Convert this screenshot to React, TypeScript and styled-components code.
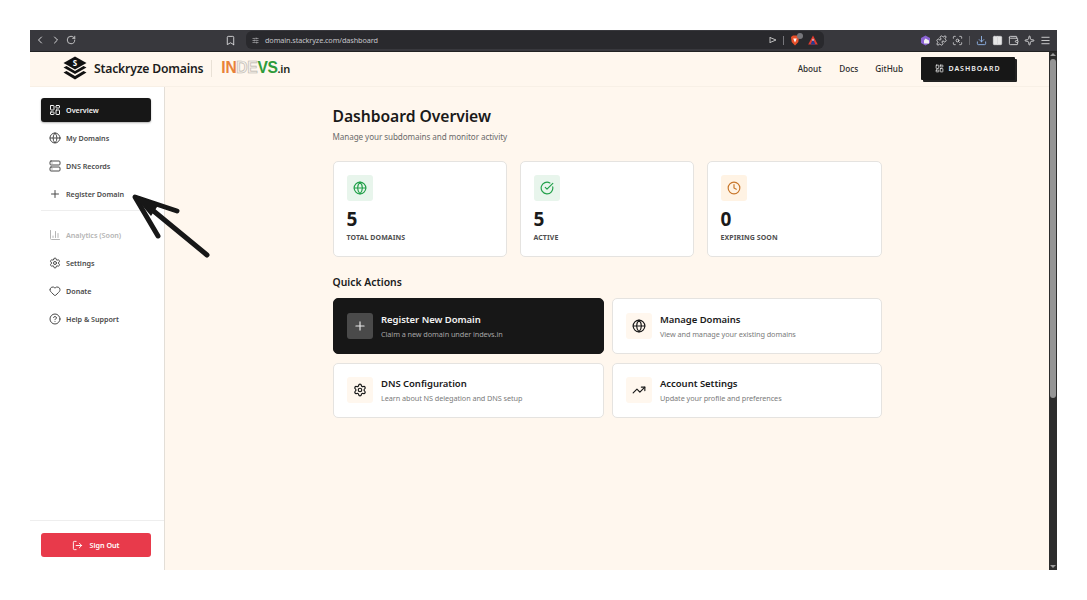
import React from "react";
import styled, { createGlobalStyle } from "styled-components";
import {
  ChevronLeft, ChevronRight, RotateCw, Bookmark, SlidersHorizontal, LayoutDashboard, Globe, Server, Plus,
  ChartColumn, Settings, Heart, CircleHelp, LogOut, CircleCheckBig, Clock, TrendingUp, Download, Columns2,
  Wallet, Menu, Puzzle, ScanSearch, Sparkle,
} from "lucide-react";

const Global = createGlobalStyle`
  html, body { margin: 0; padding: 0; background: #fff; }
  body { font-family: "Noto Sans", "Open Sans", sans-serif; width: 1087px; height: 600px; overflow: hidden; }
  * { box-sizing: border-box; }
`;

const Stage = styled.div`
  position: relative;
  width: 1087px;
  height: 600px;
  padding: 30px;
`;
const BrowserWindow = styled.div`
  width: 1027px;
  height: 540px;
  display: flex;
  flex-direction: column;
  background: #fff7ee;
`;
const Toolbar = styled.div`
  height: 22px;
  flex: none;
  background: #38383d;
  color: #d8d8da;
  display: flex;
  align-items: center;
  padding: 0 6px 1px;
  border-bottom: 1px solid #222;
`;
const NavIcons = styled.div`
  display: flex;
  align-items: center;
  gap: 4px;
  width: 191px;
  margin-left: -2px;
`;
const BookmarkSlot = styled.div`
  width: 21px;
  display: flex;
  align-items: center;
`;
const UrlBar = styled.div`
  width: 578px;
  height: 18px;
  flex: none;
  background: #29292d;
  border-radius: 6px;
  display: flex;
  align-items: center;
  gap: 6px;
  padding: 0 6px;
  font-size: 7.3px;
  color: #c4c4c8;
  letter-spacing: -0.12px;
`;
const UrlText = styled.span`
  flex: 1;
`;
const Sep = styled.span`
  width: 1px;
  height: 9px;
  background: #77777c;
`;
const Shield = styled.span`
  position: relative;
  display: flex;
  margin-right: 2px;
`;
const ShieldBadge = styled.span`
  position: absolute;
  right: -3px;
  top: -2px;
  width: 6px;
  height: 6px;
  border-radius: 50%;
  background: #77777c;
`;
const ToolIcons = styled.div`
  display: flex;
  align-items: center;
  gap: 5px;
  margin-left: auto;
  color: #d4d4d6;
`;
const ToolSep = styled.span`
  width: 1px;
  height: 9px;
  background: #66666a;
  margin: 0 1px;
`;
const WindowBody = styled.div`
  flex: 1;
  display: flex;
  min-height: 0;
`;
const Viewport = styled.div`
  flex: 1;
  display: flex;
  flex-direction: column;
  min-width: 0;
`;
const Header = styled.header`
  height: 35px;
  flex: none;
  display: flex;
  align-items: center;
  padding: 0 34px 2px 33px;
  border-bottom: 1px solid #f8f0e6;
`;
const BrandName = styled.span`
  font-size: 12.2px;
  font-weight: 600;
  color: #1c1c1c;
  margin-left: 7px;
  letter-spacing: -0.2px;
  white-space: nowrap;
`;
const BrandDivider = styled.span`
  width: 1px;
  height: 17px;
  background: #e9e1d6;
  margin: 0 9px 0 8px;
`;
const Indevs = styled.span`
  font-family: "Liberation Sans", sans-serif;
  font-size: 15.6px;
  font-weight: 700;
  letter-spacing: -0.3px;
  white-space: nowrap;
  display: flex;
  align-items: baseline;
`;
const Letters = styled.span<{ $c: string; $outline?: boolean }>`
  color: ${(p) => (p.$outline ? "#f4f0ea" : p.$c)};
  ${(p) => (p.$outline ? `-webkit-text-stroke: 0.6px ${p.$c};` : "")}
  font-weight: 900;
`;
const DotIn = styled.span`
  font-family: "Noto Sans", sans-serif;
  font-size: 11px;
  font-weight: 600;
  color: #1d2a22;
`;
const HeaderNav = styled.nav`
  margin-left: auto;
  display: flex;
  align-items: center;
`;
const NavLink = styled.a<{ $gap: number }>`
  font-size: 8.2px;
  font-weight: 500;
  color: #2a2a2a;
  margin-right: ${(p) => p.$gap}px;
`;
const DashButton = styled.button`
  width: 94px;
  height: 23px;
  border: 0;
  border-radius: 1px;
  background: #171717;
  color: #f0f0f0;
  box-shadow: 2px 2px 0 #222;
  display: flex;
  align-items: center;
  justify-content: center;
  gap: 4px;
  font-family: inherit;
  font-size: 7px;
  font-weight: 600;
  letter-spacing: 1px;
`;
const Body = styled.div`
  flex: 1;
  min-height: 0;
  display: flex;
`;
const Sidebar = styled.aside`
  width: 135px;
  flex: none;
  background: #fff;
  border-right: 1px solid #e3ded7;
  display: flex;
  flex-direction: column;
  padding: 11px 0 13px;
`;
const NavList = styled.div`
  padding: 0 13px 0 11px;
  display: flex;
  flex-direction: column;
  flex: 1;
`;
const NavItem = styled.div<{ $active?: boolean; $muted?: boolean }>`
  height: 24px;
  margin-bottom: 4px;
  flex: none;
  display: flex;
  align-items: center;
  gap: 5px;
  padding: 0 0 1px 8px;
  border-radius: 3px;
  font-size: 7.2px;
  font-weight: 600;
  white-space: nowrap;
  letter-spacing: -0.03px;
  color: ${(p) => (p.$active ? "#f4f4f4" : p.$muted ? "#b4b4b4" : "#4a4a4a")};
  background: ${(p) => (p.$active ? "#171717" : "transparent")};
  box-shadow: ${(p) => (p.$active ? "0 1px 2px rgba(0,0,0,.3)" : "none")};
`;
const NavRule = styled.div`
  height: 1px;
  background: #eeeeee;
  margin: 0 0 12px;
  flex: none;
`;
const SidebarFoot = styled.div`
  border-top: 1px solid #eeeeee;
  padding: 12px 13px 0 11px;
`;
const SignOut = styled.button`
  width: 110px;
  height: 24px;
  border: 0;
  border-radius: 3px;
  background: #e83a4b;
  color: #fff;
  display: flex;
  align-items: center;
  justify-content: center;
  gap: 6px;
  font-family: inherit;
  font-size: 7.2px;
  font-weight: 600;
`;
const Main = styled.main`
  flex: 1;
  min-width: 0;
  padding-top: 19px;
`;
const Container = styled.div`
  width: 549px;
  margin: 0 auto;
  color: #1a1a1a;
`;
const Title = styled.h1`
  margin: 0;
  font-size: 15.7px;
  line-height: 21px;
  font-weight: 600;
  letter-spacing: -0.05px;
`;
const Subtitle = styled.p`
  margin: 4px 0 0;
  font-size: 8.1px;
  line-height: 11px;
  color: #6b6b6b;
  letter-spacing: -0.07px;
`;
const Stats = styled.div`
  display: grid;
  grid-template-columns: 174px 174px 175px;
  gap: 13px;
  margin-top: 19px;
`;
const Card = styled.div`
  height: 96px;
  background: #fff;
  border: 1px solid #e5e3e0;
  border-radius: 5px;
  padding: 13px;
`;
const IconTile = styled.div<{ $bg: string; $fg: string }>`
  width: 26px;
  height: 26px;
  border-radius: 3px;
  display: flex;
  align-items: center;
  justify-content: center;
  background: ${(p) => p.$bg};
  color: ${(p) => p.$fg};
  flex: none;
`;
const Value = styled.div`
  font-size: 19px;
  line-height: 22px;
  font-weight: 700;
  margin-top: 7px;
`;
const Label = styled.div`
  font-size: 7px;
  line-height: 10px;
  font-weight: 700;
  color: #4f4f4f;
  margin-top: 3px;
  letter-spacing: 0.08px;
`;
const SectionTitle = styled.h2`
  margin: 18px 0 0;
  font-size: 10.4px;
  line-height: 14px;
  font-weight: 600;
`;
const Actions = styled.div`
  display: grid;
  grid-template-columns: 271px 270px;
  grid-auto-rows: 55.5px;
  gap: 9px 8px;
  margin-top: 9px;
`;
const Action = styled.div<{ $dark?: boolean }>`
  border-radius: 5px;
  display: flex;
  align-items: center;
  gap: 8px;
  padding: 0 13px;
  background: ${(p) => (p.$dark ? "#171717" : "#fff")};
  border: 1px solid ${(p) => (p.$dark ? "#171717" : "#e5e3e0")};
  color: ${(p) => (p.$dark ? "#f2f2f2" : "#1a1a1a")};
`;
const ActionText = styled.div`
  display: flex;
  flex-direction: column;
  gap: 2px;
  margin-left: 0.5px;
  padding-top: 1px;
`;
const ActionTitle = styled.div`
  font-size: 9.5px;
  line-height: 14px;
  font-weight: 600;
  letter-spacing: -0.04px;
`;
const ActionSub = styled.div<{ $dark?: boolean }>`
  font-size: 7.3px;
  line-height: 11px;
  color: ${(p) => (p.$dark ? "#a5a5a5" : "#7b7b7b")};
  letter-spacing: -0.08px;
`;
const ScrollBar = styled.div`
  width: 8px;
  flex: none;
  background: #2c2c2c;
  display: flex;
  flex-direction: column;
  align-items: center;
  padding-top: 1px;
`;
const ScrollArrow = styled.div<{ $down?: boolean }>`
  width: 0;
  height: 0;
  border-left: 3px solid transparent;
  border-right: 3px solid transparent;
  ${(p) => (p.$down ? "border-top: 3px solid #9a9a9a; margin-top: auto; margin-bottom: 2px;" : "border-bottom: 3px solid #9a9a9a;")}
`;
const ScrollThumb = styled.div`
  width: 6px;
  height: 339px;
  margin-top: 3px;
  background: #959595;
  border-radius: 3px;
`;
const ArrowMark = styled.svg`
  position: absolute;
  left: 125px;
  top: 190px;
  width: 90px;
  height: 75px;
`;

const Logo = () => (
  <svg width="24" height="24" viewBox="0 0 24 24">
    <path d="M12 0.5 L23.5 7 L12 13.5 L0.5 7 Z" fill="#111" />
    <text x="12" y="10" fontSize="8" fontWeight="700" fill="#fff" textAnchor="middle" fontFamily="Noto Sans">S</text>
    <path d="M0.5 11.5 L3.5 10 L12 15 L20.5 10 L23.5 11.5 L12 18 Z" fill="#111" />
    <path d="M0.5 16.5 L3.5 15 L12 20 L20.5 15 L23.5 16.5 L12 23.5 Z" fill="#111" />
  </svg>
);

const stats = [
  { Icon: Globe, bg: "#e8f5ec", fg: "#22a04a", value: "5", label: "TOTAL DOMAINS" },
  { Icon: CircleCheckBig, bg: "#e8f5ec", fg: "#22a04a", value: "5", label: "ACTIVE" },
  { Icon: Clock, bg: "#fff3e4", fg: "#c8762a", value: "0", label: "EXPIRING SOON" },
];

const actions = [
  { Icon: Plus, title: "Register New Domain", sub: "Claim a new domain under indevs.in", dark: true },
  { Icon: Globe, title: "Manage Domains", sub: "View and manage your existing domains" },
  { Icon: Settings, title: "DNS Configuration", sub: "Learn about NS delegation and DNS setup" },
  { Icon: TrendingUp, title: "Account Settings", sub: "Update your profile and preferences" },
];

export default function App() {
  return (
    <Stage>
      <Global />
      <BrowserWindow>
        <Toolbar>
          <NavIcons>
            <ChevronLeft size={12} />
            <ChevronRight size={12} />
            <RotateCw size={10} />
          </NavIcons>
          <BookmarkSlot><Bookmark size={11} /></BookmarkSlot>
          <UrlBar>
            <SlidersHorizontal size={7} />
            <UrlText>domain.stackryze.com/dashboard</UrlText>
            <svg width="8" height="8" viewBox="0 0 8 8"><path d="M1 1v6M1 1.5 L7 4 L1 6.5" fill="none" stroke="#ccc" strokeWidth="0.9" /></svg>
            <Sep />
            <Shield>
              <svg width="10" height="11" viewBox="0 0 10 11"><path d="M1 2 L3 .5 H7 L9 2 L8.3 7 L5 10.5 L1.7 7 Z" fill="#e8502a" /><path d="M3.2 3.5 H6.8 L5 7.5 Z" fill="#fff" /></svg>
              <ShieldBadge />
            </Shield>
            <svg width="10" height="10" viewBox="0 0 10 10"><path d="M5 .5 L9.8 9.5 H.2 Z" fill="#e23b2e" /><path d="M5 4 L7.5 9.5 H2.5 Z" fill="#2a3b8f" /><path d="M5 3.5 L6 5.6 H4 Z" fill="#fff" /></svg>
          </UrlBar>
          <ToolIcons>
            <svg width="11" height="11" viewBox="0 0 11 11"><path d="M5.5 .5 L10 3 V8 L5.5 10.5 L1 8 V3 Z" fill="#8a63d2" /><path d="M5.5 3.5 L9 5.5 V8.5 H4 V5.5 Z" fill="#f2f2f2" /></svg>
            <Puzzle size={11} />
            <ScanSearch size={11} />
            <ToolSep />
            <Download size={11} color="#8fb4e8" />
            <Columns2 size={11} fill="#e6e6e6" />
            <Wallet size={11} />
            <Sparkle size={11} />
            <Menu size={11} />
          </ToolIcons>
        </Toolbar>
        <WindowBody>
          <Viewport>
            <Header>
              <Logo />
              <BrandName>Stackryze Domains</BrandName>
              <BrandDivider />
              <Indevs>
                <Letters $c="#e8823a">IN</Letters>
                <Letters $c="#b9b4ac" $outline>DE</Letters>
                <Letters $c="#2e9b3a">VS</Letters>
                <DotIn>.in</DotIn>
              </Indevs>
              <HeaderNav>
                <NavLink $gap={18}>About</NavLink>
                <NavLink $gap={17}>Docs</NavLink>
                <NavLink $gap={18}>GitHub</NavLink>
                <DashButton><LayoutDashboard size={9} />DASHBOARD</DashButton>
              </HeaderNav>
            </Header>
            <Body>
              <Sidebar>
                <NavList>
                  <NavItem $active><LayoutDashboard size={12} />Overview</NavItem>
                  <NavItem><Globe size={12} />My Domains</NavItem>
                  <NavItem><Server size={12} />DNS Records</NavItem>
                  <NavItem><Plus size={12} />Register Domain</NavItem>
                  <NavRule />
                  <NavItem $muted><ChartColumn size={12} />Analytics (Soon)</NavItem>
                  <NavItem><Settings size={12} />Settings</NavItem>
                  <NavItem><Heart size={12} />Donate</NavItem>
                  <NavItem><CircleHelp size={12} />Help &amp; Support</NavItem>
                </NavList>
                <SidebarFoot>
                  <SignOut><LogOut size={11} />Sign Out</SignOut>
                </SidebarFoot>
              </Sidebar>
              <Main>
                <Container>
                  <Title>Dashboard Overview</Title>
                  <Subtitle>Manage your subdomains and monitor activity</Subtitle>
                  <Stats>
                    {stats.map(({ Icon, bg, fg, value, label }) => (
                      <Card key={label}>
                        <IconTile $bg={bg} $fg={fg}><Icon size={14} /></IconTile>
                        <Value>{value}</Value>
                        <Label>{label}</Label>
                      </Card>
                    ))}
                  </Stats>
                  <SectionTitle>Quick Actions</SectionTitle>
                  <Actions>
                    {actions.map(({ Icon, title, sub, dark }) => (
                      <Action key={title} $dark={dark}>
                        <IconTile $bg={dark ? "#4a4a4a" : "#fff7ee"} $fg={dark ? "#e8e8e8" : "#1a1a1a"}><Icon size={14} /></IconTile>
                        <ActionText>
                          <ActionTitle>{title}</ActionTitle>
                          <ActionSub $dark={dark}>{sub}</ActionSub>
                        </ActionText>
                      </Action>
                    ))}
                  </Actions>
                </Container>
              </Main>
            </Body>
          </Viewport>
          <ScrollBar>
            <ScrollArrow />
            <ScrollThumb />
            <ScrollArrow $down />
          </ScrollBar>
        </WindowBody>
      </BrowserWindow>
      <ArrowMark viewBox="0 0 90 75" aria-hidden="true">
        <path d="M82 65 L14 9" fill="none" stroke="#171717" strokeWidth="5" strokeLinecap="round" />
        <path d="M52 21 L10 7 L33 46" fill="none" stroke="#171717" strokeWidth="5" strokeLinecap="round" strokeLinejoin="round" />
        <path d="M9 6 L34 14 L26 26 Z" fill="#171717" />
      </ArrowMark>
    </Stage>
  );
}
